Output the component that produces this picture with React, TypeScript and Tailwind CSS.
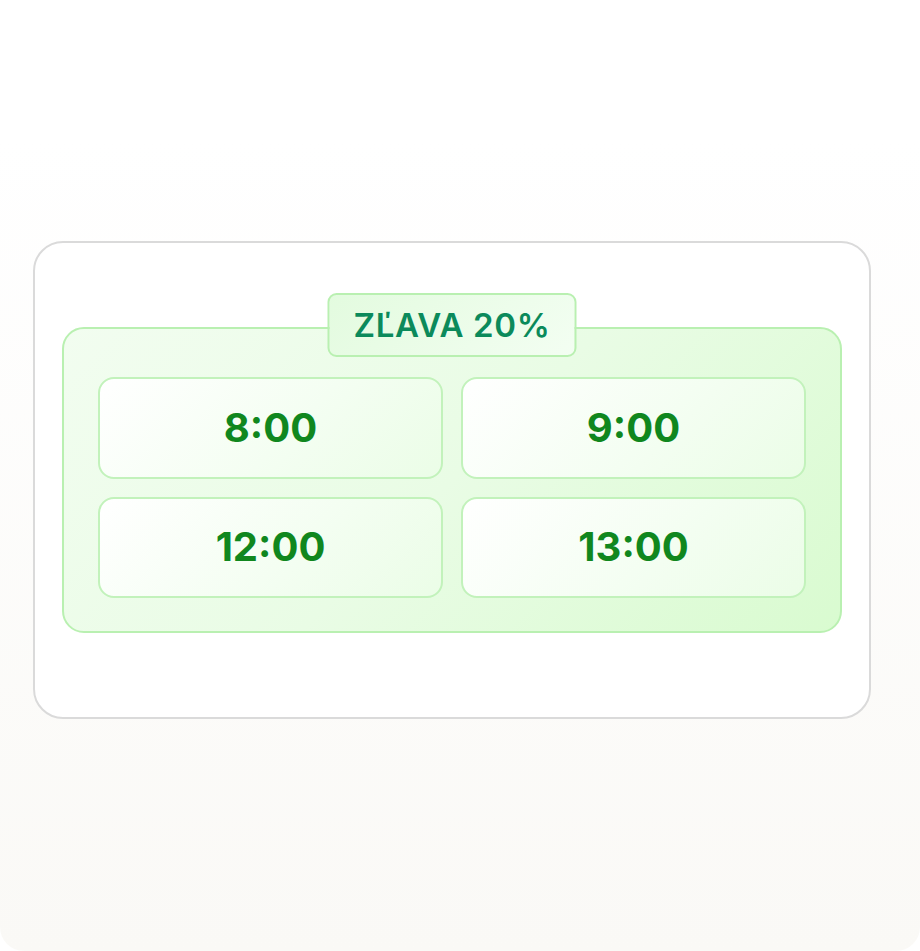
import React from "react";

const times = ["8:00", "9:00", "12:00", "13:00"];

export default function App() {
  return (
    <div className="w-[920px] h-[951px] rounded-[24px] overflow-hidden bg-[linear-gradient(to_bottom,#ffffff_0%,#ffffff_15%,#faf9f6_100%)] pt-[241px] pl-[33px]">
      <div className="w-[838px] h-[478px] rounded-[30px] border-2 border-[#dadada] bg-white flex items-center justify-center">
        <div className="relative w-[780px] h-[306px] rounded-[22px] border-2 border-[#b9f0b1] bg-[linear-gradient(135deg,#f2fdf0_0%,#e9fce5_50%,#d9fbd0_100%)] pt-[48px] px-[34px] pb-[33px]">
          <div className="absolute left-1/2 -translate-x-1/2 -top-[36px] w-[249px] h-[64px] rounded-[9px] border-2 border-[#b9f0b1] bg-[linear-gradient(135deg,#e3fbdf_0%,#f3fef2_100%)] flex items-center justify-center">
            <span className="text-[33px] font-semibold tracking-[0.02em] text-[#0b8a5b] font-['Inter','Noto_Sans',sans-serif] leading-none">
              ZĽAVA 20%
            </span>
          </div>
          <div className="grid grid-cols-2 gap-[18px] h-full">
            {times.map((t) => (
              <div
                key={t}
                className="rounded-[16px] border-2 border-[#c2f2bb] bg-[linear-gradient(135deg,#ffffff_0%,#f3fef1_60%,#ebfde7_100%)] flex items-center justify-center"
              >
                <span className="text-[40px] font-bold text-[#10871e] font-['Inter','Liberation_Sans',sans-serif] leading-none">
                  {t}
                </span>
              </div>
            ))}
          </div>
        </div>
      </div>
    </div>
  );
}
